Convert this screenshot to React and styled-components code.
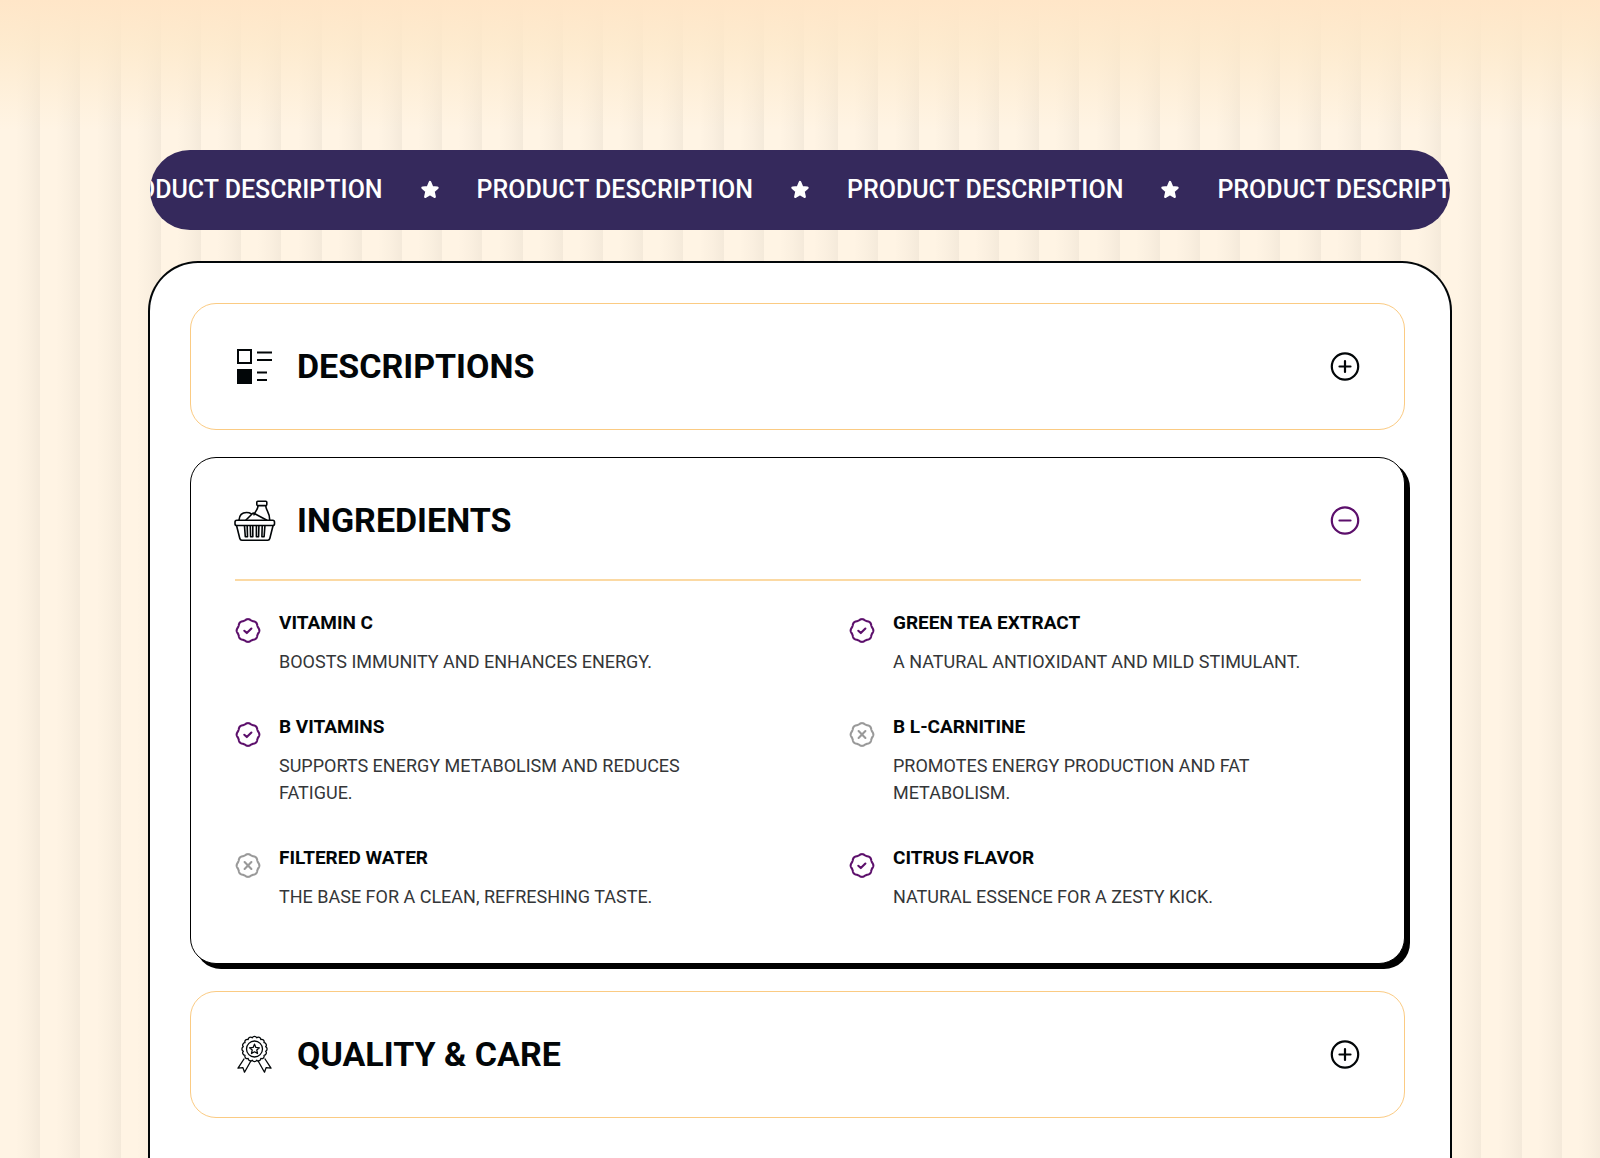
import React, { Fragment, useState } from 'react'
import styled, { createGlobalStyle } from 'styled-components'

const colors = {
  ink: '#020608',
  text: '#343638',
  purple: '#5c0f6b',
  navy: '#35295c',
  peach: '#fbcb83',
  muted: '#999999',
}

const GlobalStyle = createGlobalStyle`
  * {
    box-sizing: border-box;
  }
  body {
    margin: 0;
    font-family: Roboto, sans-serif;
    color: ${colors.ink};
  }
  button {
    font-family: inherit;
  }
  h2, h3, p, ul {
    margin: 0;
    padding: 0;
  }
`

// twenty soft folds per 804px tile
const stripes = `repeating-linear-gradient(
  90deg,
  rgba(60, 55, 50, 0) 0%,
  rgba(60, 55, 50, 0) 2%,
  rgba(60, 55, 50, 0.025) 3.6%,
  rgba(60, 55, 50, 0.055) 5%
)`

const Page = styled.main`
  display: flex;
  flex-direction: column;
  min-height: 100vh;
  padding: 150px 148px 0;
  background-color: #fff4e4;
  background-image:
    linear-gradient(180deg, #ffe6c8 0, rgba(253, 232, 200, 0.75) 45px, rgba(255, 240, 220, 0) 130px),
    ${stripes},
    ${stripes};
  background-size: 100% 100%, 804px 100%, 804px 100%;
  background-position: 0 0, 0 0, 798px 0;
  background-repeat: no-repeat;
`

const Banner = styled.div`
  display: flex;
  align-items: center;
  justify-content: center;
  gap: 37px;
  margin: 0 2px 31px;
  padding: 20px 0;
  overflow: hidden;
  border-radius: 40px;
  background-color: ${colors.navy};
  color: white;
`

const BannerText = styled.span`
  flex: none;
  font-size: 25px;
  line-height: 40px;
  font-weight: 500;
  white-space: nowrap;
`

const BannerStar = styled.svg`
  flex: none;
  width: 20px;
  height: 20px;
`

const Panel = styled.section`
  display: flex;
  flex: 1;
  flex-direction: column;
  gap: 27px;
  padding: 40px 45px 38px 40px;
  border: 2px solid ${colors.ink};
  border-bottom: 0;
  border-radius: 50px 50px 0 0;
  background-color: white;
`

const Card = styled.article`
  padding: 0 43px 0 44px;
  border: 1px solid ${({ $open }) => ($open ? 'black' : colors.peach)};
  border-radius: 26px;
  background-color: white;
  box-shadow: ${({ $open }) => ($open ? '5px 5px 0 black' : 'none')};
`

const CardHeader = styled.button`
  display: flex;
  align-items: center;
  width: 100%;
  padding: 40px 0;
  border: 0;
  background: none;
  color: ${colors.ink};
  text-align: left;
  cursor: pointer;
`

const HeaderIcon = styled.svg`
  flex: none;
  width: 40px;
  height: 42px;
  margin-right: 22px;
  overflow: visible;
`

const CardTitle = styled.span`
  flex: 1;
  font-size: 34px;
  line-height: 45px;
  font-weight: 700;
`

const ToggleIcon = styled.svg`
  flex: none;
  width: 32px;
  height: 32px;
  color: ${({ $open }) => ($open ? colors.purple : colors.ink)};
`

const CardBody = styled.div`
  margin-top: -4px;
  padding: 29px 0 53px;
  border-top: 2px solid #fbd9a3;
`

const IngredientList = styled.ul`
  display: grid;
  grid-template-columns: 1fr 1fr;
  gap: 39px 102px;
  list-style: none;
`

const Ingredient = styled.li`
  display: flex;
  gap: 18px;
`

const BadgeSvg = styled.svg`
  flex: none;
  width: 26px;
  height: 26px;
  margin-top: 8px;
  color: ${({ $included }) => ($included ? colors.purple : colors.muted)};
`

const IngredientName = styled.h3`
  font-size: 19px;
  line-height: 26px;
  font-weight: 700;
`

const Description = styled.p`
  margin-top: 12px;
  font-size: 18px;
  line-height: 27px;
  color: ${colors.text};
`

// closed curve whose radius swings `depth` around `radius`, one swing per lobe
function wavyCircle(cx, cy, radius, depth, lobes) {
  const points = []
  for (let i = 0; i < 128; i++) {
    const angle = (i / 128) * Math.PI * 2
    const r = radius + depth * Math.cos(lobes * angle)
    points.push(`${(cx + r * Math.sin(angle)).toFixed(2)} ${(cy - r * Math.cos(angle)).toFixed(2)}`)
  }
  return `M${points.join('L')}Z`
}

// ring of outward arcs, as on the edge of a medal
function scallopedCircle(cx, cy, radius, lobes) {
  const step = (Math.PI * 2) / lobes
  const arc = radius * Math.sin(step / 2) * 1.1
  let d = ''
  for (let i = 0; i <= lobes; i++) {
    const angle = (i - 0.5) * step
    const x = (cx + radius * Math.sin(angle)).toFixed(2)
    const y = (cy - radius * Math.cos(angle)).toFixed(2)
    d += i === 0 ? `M${x} ${y}` : `A${arc} ${arc} 0 0 1 ${x} ${y}`
  }
  return d + 'Z'
}

const badgePath = wavyCircle(13, 12.5, 10.9, 0.45, 8)
const medalPath = scallopedCircle(19.5, 15, 11.4, 16)

const Star = () => (
  <BannerStar viewBox="0 0 20 20" aria-hidden="true">
    <path
      d="M10 2.2l2.1 5 5.3.5-4 3.6 1.2 5.4-4.6-2.9-4.6 2.9 1.2-5.4-4-3.6 5.3-.5z"
      fill="currentColor"
      stroke="currentColor"
      strokeWidth="2.6"
      strokeLinejoin="round"
    />
  </BannerStar>
)

const Badge = ({ included }) => (
  <BadgeSvg
    $included={included}
    viewBox="0 0 26 26"
    fill="none"
    stroke="currentColor"
    strokeWidth="2.1"
    strokeLinecap="round"
    strokeLinejoin="round"
    role="img"
    aria-label={included ? 'Included' : 'Not included'}
  >
    <path d={badgePath} />
    {included ? <path d="M9.3 12.8l2.500 2.300 4.600-4.600" /> : <path d="M9.6 9.100l6.800 6.800M16.400 9.100l-6.800 6.800" />}
  </BadgeSvg>
)

const ListIcon = () => (
  <HeaderIcon viewBox="0 0 40 42" fill="none" stroke="currentColor" strokeWidth="2" aria-hidden="true">
    <path d="M3 4h13v13H3z" />
    <path d="M2 23h15v15H2z" fill="currentColor" stroke="none" />
    <path d="M22 6.500h15M22 14h15M22 26.500h10M22 34h10" />
  </HeaderIcon>
)

const BasketIcon = () => (
  <HeaderIcon
    viewBox="0 0 40 42"
    fill="none"
    stroke="currentColor"
    strokeWidth="1.6"
    strokeLinecap="round"
    strokeLinejoin="round"
    aria-hidden="true"
  >
    <rect x="21.8" y="1.2" width="10" height="4.4" rx="1" />
    <path d="M23 5.800c0 4-3.200 5.600-4 9M30.800 5.800c0 4.600 3.900 6.200 3.900 14" />
    <path d="M4 20c.4-5 3.600-7.500 7.500-7.500 2.200 0 3.700.5 4.800 1.300" />
    <path d="M11 20l6.300-6.300c.7-.6 1.300-.7 2-.3L31.500 20" />
    <rect x="0" y="20.3" width="39.5" height="5.2" rx="1.8" />
    <path d="M1.600 25.700l3.200 12.800c.3 1.100.9 1.700 2 1.700h26c1.100 0 1.700-.6 2-1.700l3.200-12.800" />
    <path d="M9.500 26l.8 10.800h2.200L12.200 26M15.300 26l.3 10.800h2.200L17.800 26M21.400 26v10.800h2.200l.3-10.800M27.200 26l-.3 10.800h2.200l.8-10.800" />
  </HeaderIcon>
)

const MedalIcon = () => (
  <HeaderIcon
    viewBox="0 0 40 42"
    fill="none"
    stroke="currentColor"
    strokeWidth="1.3"
    strokeLinejoin="round"
    aria-hidden="true"
  >
    <path d={medalPath} />
    <circle cx="19.5" cy="15" r="8" />
    <path d="M19.500 10.200l1.400 3.200 3.500.4-2.600 2.300.7 3.400-3-1.700-3 1.700.7-3.400-2.600-2.300 3.500-.4z" />
    <path d="M9.300 24.500L3 34.200l4.900-.6 1.600 4.600 6.500-11.400M29.700 24.500L36 34.200l-4.900-.6-1.600 4.600L23 26.800" />
  </HeaderIcon>
)

const Toggle = ({ open }) => (
  <ToggleIcon
    $open={open}
    viewBox="0 0 32 32"
    fill="none"
    stroke="currentColor"
    strokeWidth="2.2"
    strokeLinecap="round"
    aria-hidden="true"
  >
    <circle cx="16" cy="15.5" r="13.2" />
    <path d={open ? 'M10.500 15.500h11' : 'M10.500 15.500h11M16 10v11'} />
  </ToggleIcon>
)

const ingredients = [
  { name: 'VITAMIN C', description: 'BOOSTS IMMUNITY AND ENHANCES ENERGY.', included: true },
  { name: 'GREEN TEA EXTRACT', description: 'A NATURAL ANTIOXIDANT AND MILD STIMULANT.', included: true },
  { name: 'B VITAMINS', description: 'SUPPORTS ENERGY METABOLISM AND REDUCES FATIGUE.', included: true },
  { name: 'B L-CARNITINE', description: 'PROMOTES ENERGY PRODUCTION AND FAT METABOLISM.', included: false },
  { name: 'FILTERED WATER', description: 'THE BASE FOR A CLEAN, REFRESHING TASTE.', included: false },
  { name: 'CITRUS FLAVOR', description: 'NATURAL ESSENCE FOR A ZESTY KICK.', included: true },
]

const Ingredients = () => (
  <CardBody>
    <IngredientList>
      {ingredients.map(({ name, description, included }) => (
        <Ingredient key={name}>
          <Badge included={included} />
          <div>
            <IngredientName>{name}</IngredientName>
            <Description>{description}</Description>
          </div>
        </Ingredient>
      ))}
    </IngredientList>
  </CardBody>
)

const sections = [
  { title: 'DESCRIPTIONS', Icon: ListIcon },
  { title: 'INGREDIENTS', Icon: BasketIcon, Body: Ingredients },
  { title: 'QUALITY & CARE', Icon: MedalIcon },
]

const App = () => {
  const [openSection, setOpenSection] = useState('INGREDIENTS')

  return (
    <>
      <GlobalStyle />
      <Page>
        <Banner>
          {[0, 1, 2, 3].map(idx => (
            <Fragment key={idx}>
              {idx > 0 && <Star />}
              <BannerText>PRODUCT DESCRIPTION</BannerText>
            </Fragment>
          ))}
        </Banner>
        <Panel>
          {sections.map(({ title, Icon, Body }) => {
            const open = openSection === title
            return (
              <Card $open={open} key={title}>
                <h2>
                  <CardHeader
                    type="button"
                    aria-expanded={open}
                    onClick={() => setOpenSection(open ? null : title)}
                  >
                    <Icon />
                    <CardTitle>{title}</CardTitle>
                    <Toggle open={open} />
                  </CardHeader>
                </h2>
                {open && Body && <Body />}
              </Card>
            )
          })}
        </Panel>
      </Page>
    </>
  )
}

export default App
